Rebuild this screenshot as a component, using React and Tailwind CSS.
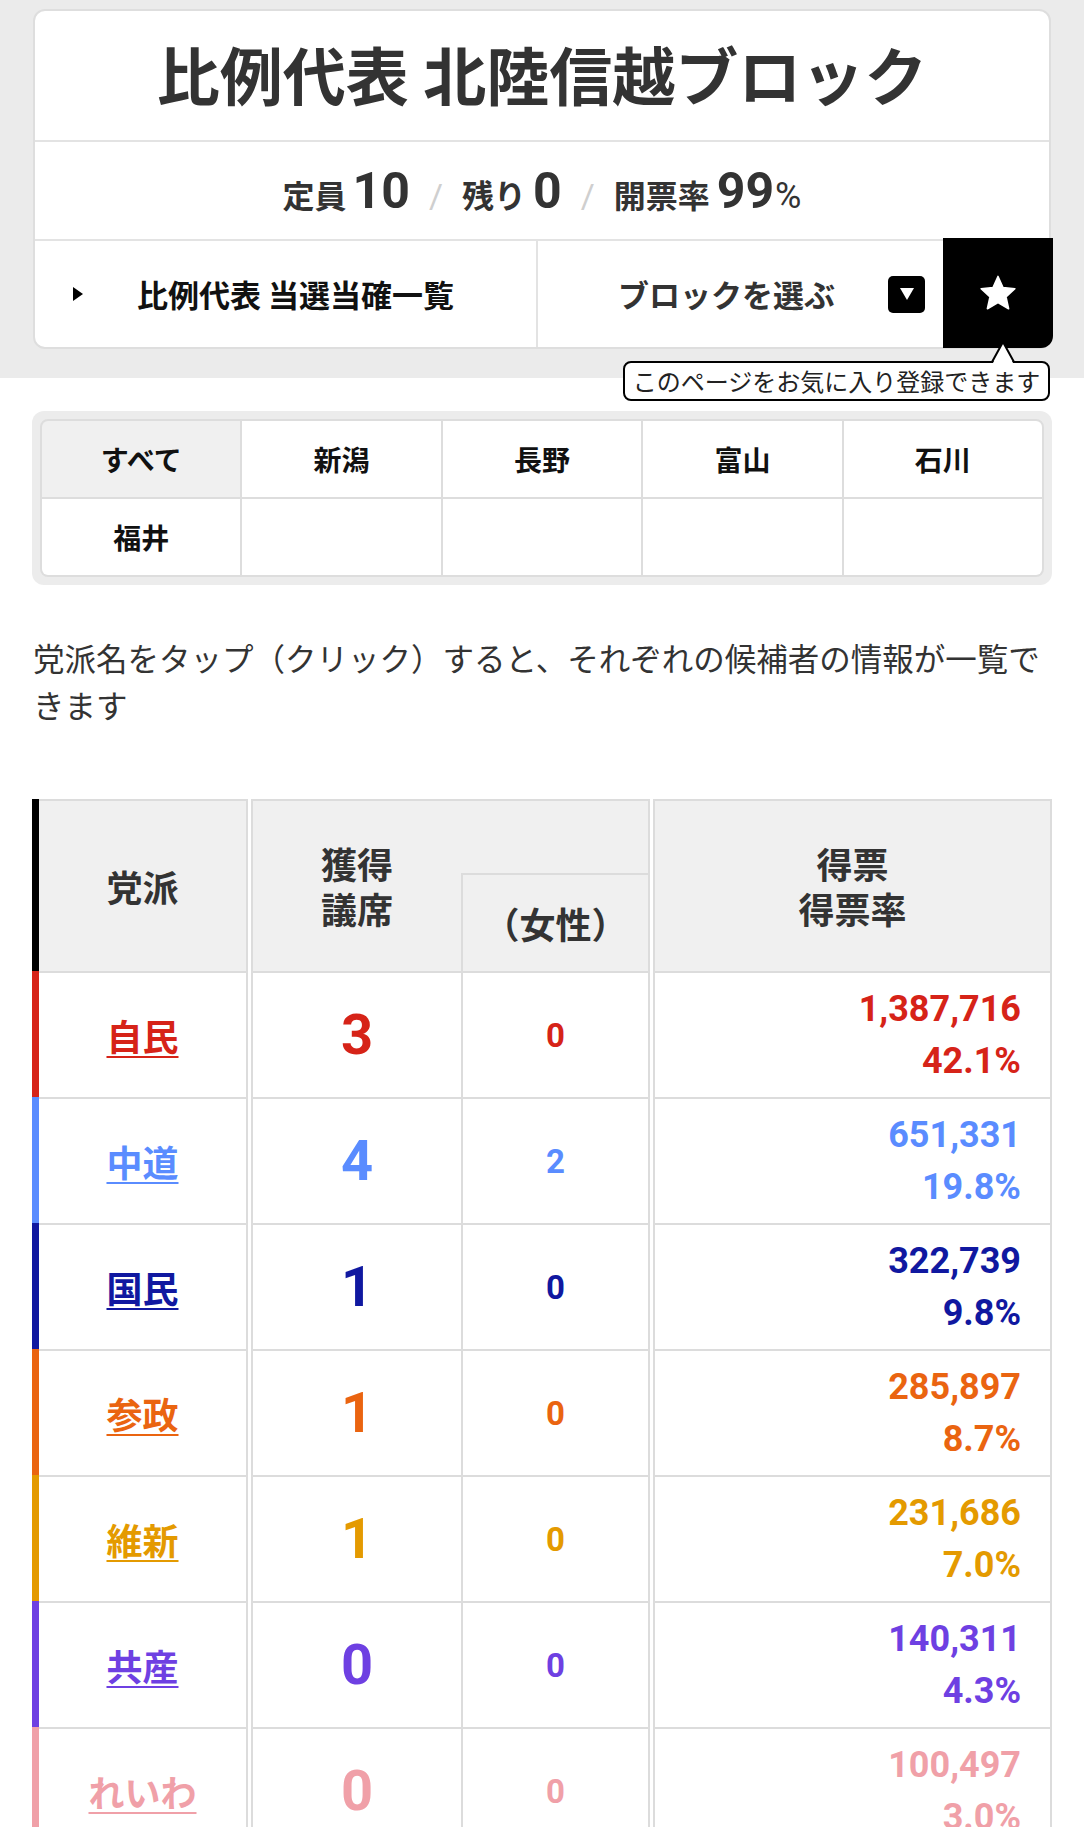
import React from "react";

const parties = [
  { name: "自民", seats: "3", female: "0", votes: "1,387,716", rate: "42.1%", text: "text-[#d62318]", bar: "bg-[#d62318]" },
  { name: "中道", seats: "4", female: "2", votes: "651,331", rate: "19.8%", text: "text-[#5a8cff]", bar: "bg-[#5a8cff]" },
  { name: "国民", seats: "1", female: "0", votes: "322,739", rate: "9.8%", text: "text-[#1018a0]", bar: "bg-[#1018a0]" },
  { name: "参政", seats: "1", female: "0", votes: "285,897", rate: "8.7%", text: "text-[#ea6410]", bar: "bg-[#ea6410]" },
  { name: "維新", seats: "1", female: "0", votes: "231,686", rate: "7.0%", text: "text-[#e49a00]", bar: "bg-[#e49a00]" },
  { name: "共産", seats: "0", female: "0", votes: "140,311", rate: "4.3%", text: "text-[#6e40e2]", bar: "bg-[#6e40e2]" },
  { name: "れいわ", seats: "0", female: "0", votes: "100,497", rate: "3.0%", text: "text-[#f0a0a8]", bar: "bg-[#f0a0a8]" },
];

const regions = ["すべて", "新潟", "長野", "富山", "石川", "福井", "", "", "", ""];

const NUM = "[font-family:Roboto,'Noto_Sans_CJK_JP',sans-serif]";

export default function App() {
  return (
    <div className="min-h-screen bg-white text-[#333] [font-family:'Noto_Sans_CJK_JP','Noto_Sans',sans-serif]">
      {/* Header area */}
      <div className="bg-[#ebebeb] px-[33px] pt-[9px] pb-[29px]">
        <div className="rounded-[12px] border-2 border-[#dedede] bg-white">
          <h1 className="flex h-[131px] items-center justify-center border-b-2 border-[#e3e3e3] pb-[6px] text-[63px] font-bold leading-none text-[#333]">
            比例代表 北陸信越ブロック
          </h1>
          <div className="flex h-[99px] items-baseline justify-center border-b-2 border-[#e3e3e3] pt-[12px]">
            <span className="text-[32px] font-bold">定員</span>
            <span className={`ml-[6px] text-[50px] font-bold ${NUM}`}>10</span>
            <span className={`mx-[19px] text-[34px] text-[#cfcfcf] ${NUM}`}>/</span>
            <span className="text-[32px] font-bold">残り</span>
            <span className={`ml-[7px] text-[50px] font-bold ${NUM}`}>0</span>
            <span className={`mx-[19px] text-[34px] text-[#cfcfcf] ${NUM}`}>/</span>
            <span className="text-[32px] font-bold">開票率</span>
            <span className={`ml-[7px] text-[50px] font-bold ${NUM}`}>99</span>
            <span className={`ml-[1px] text-[36px] ${NUM}`}>%</span>
          </div>
          <div className="flex h-[106px]">
            <div className="flex w-[503px] items-center border-r-2 border-[#e3e3e3] pl-[38px]">
              <svg width="10" height="14" viewBox="0 0 10 14" className="shrink-0">
                <polygon points="0,0 10,7 0,14" fill="#000" />
              </svg>
              <span className="ml-[54px] text-[31px] font-bold text-[#111]">比例代表 当選当確一覧</span>
            </div>
            <div className="flex flex-1 items-center pl-[80px] pr-[18px]">
              <span className="text-[31px] font-bold text-[#333]">ブロックを選ぶ</span>
              <span className="ml-auto flex h-[37px] w-[37px] items-center justify-center rounded-[5px] bg-black">
                <svg width="14" height="12" viewBox="0 0 14 12">
                  <polygon points="0,0 14,0 7,12" fill="#fff" />
                </svg>
              </span>
            </div>
            <div className="relative -mb-[1px] -mr-[4px] -mt-[3px] flex w-[110px] items-center justify-center rounded-br-[12px] bg-black">
              <svg width="40" height="38" viewBox="0 0 24 23">
                <polygon
                  points="12,1.5 15,8.2 22.2,8.9 16.8,13.8 18.4,21 12,17.3 5.6,21 7.2,13.8 1.8,8.9 9,8.2"
                  fill="#fff"
                  stroke="#fff"
                  strokeWidth="1"
                  strokeLinejoin="round"
                />
              </svg>
              <div className="absolute right-[3px] top-[123px] z-10 flex h-[40px] w-[427px] items-center justify-center rounded-[8px] border-2 border-black bg-white">
                <svg width="26" height="24" viewBox="0 0 26 24" className="absolute left-[365px] top-[-22px]">
                  <polygon points="13,1 24,24 2,24" fill="#fff" />
                  <polyline points="2,21 13,1 24,21" fill="none" stroke="#000" strokeWidth="2" strokeLinejoin="miter" />
                </svg>
                <span className="text-[24px] leading-none text-[#222]">このページをお気に入り登録できます</span>
              </div>
            </div>
          </div>
        </div>
      </div>

      {/* Region tabs */}
      <div className="mx-[32px] mt-[33px] rounded-[12px] bg-[#ececec] p-[8px]">
        <div className="grid grid-cols-5 gap-[2px] overflow-hidden rounded-[8px] border-2 border-[#dddddd] bg-[#dddddd]">
          {regions.map((r, i) => (
            <div
              key={i}
              className={`flex h-[76px] items-center justify-center text-[28px] font-bold text-[#111] ${i === 0 ? "bg-[#f0f0f0]" : "bg-white"}`}
            >
              {r}
            </div>
          ))}
        </div>
      </div>

      {/* Description */}
      <p className="mx-[33px] mt-[49px] text-[31.5px] leading-[47px] text-[#333]">
        党派名をタップ（クリック）すると、それぞれの候補者の情報が一覧できます
      </p>

      {/* Results table */}
      <div className="mx-[32px] mt-[71px]">
        {/* Header */}
        <div className="flex h-[172px]">
          <div className="w-[7px] bg-black" />
          <div className="flex w-[209px] items-center justify-center border-r-2 border-t-2 border-[#dcdcdc] bg-[#f0f0f0] text-[36px] font-bold text-[#333]">
            党派
          </div>
          <div className="w-[3px]" />
          <div className="flex w-[399px] border-l-2 border-r-2 border-t-2 border-[#dcdcdc] bg-[#f0f0f0]">
            <div className="flex w-[208px] flex-col items-center justify-center text-center text-[36px] font-bold leading-[45px] text-[#333]">
              <span>獲得</span>
              <span>議席</span>
            </div>
            <div className="flex flex-1 flex-col">
              <div className="h-[72px]" />
              <div className="flex flex-1 items-center justify-center border-l-2 border-t-2 border-[#dcdcdc] text-[36px] font-bold text-[#333]">
                （女性）
              </div>
            </div>
          </div>
          <div className="w-[3px]" />
          <div className="flex w-[399px] flex-col items-center justify-center border-l-2 border-r-2 border-t-2 border-[#dcdcdc] bg-[#f0f0f0] text-center text-[36px] font-bold leading-[45px] text-[#333]">
            <span>得票</span>
            <span>得票率</span>
          </div>
        </div>
        {/* Rows */}
        {parties.map((p) => (
          <div key={p.name} className="flex h-[126px]">
            <div className={`w-[7px] ${p.bar}`} />
            <div className="flex w-[209px] items-center justify-center border-r-2 border-t-2 border-[#dcdcdc] bg-white">
              <a className={`text-[36px] font-bold leading-none underline decoration-2 underline-offset-[5px] ${p.text}`}>
                {p.name}
              </a>
            </div>
            <div className="w-[3px]" />
            <div className={`flex w-[210px] items-center justify-center border-l-2 border-t-2 border-[#dcdcdc] bg-white text-[56px] font-bold leading-none ${NUM} ${p.text}`}>
              {p.seats}
            </div>
            <div className={`flex w-[189px] items-center justify-center border-l-2 border-r-2 border-t-2 border-[#dcdcdc] bg-white text-[33px] font-bold leading-none ${NUM} ${p.text}`}>
              {p.female}
            </div>
            <div className="w-[3px]" />
            <div className={`flex w-[399px] flex-col items-end justify-center border-l-2 border-r-2 border-t-2 border-[#dcdcdc] bg-white pr-[29px] text-[36px] font-bold leading-[52px] ${NUM} ${p.text}`}>
              <span>{p.votes}</span>
              <span>{p.rate}</span>
            </div>
          </div>
        ))}
        <div className="ml-[7px] h-[2px] bg-[#dcdcdc]" />
      </div>
      <div className="h-[60px]" />
    </div>
  );
}
